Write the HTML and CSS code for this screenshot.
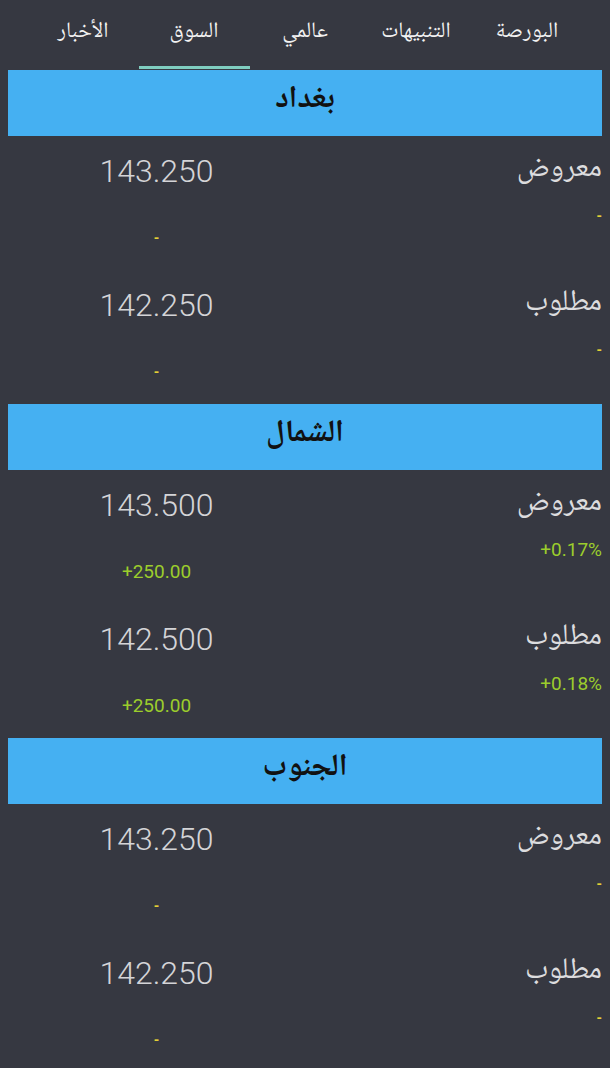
FILE: index.html
```html
<!DOCTYPE html>
<html lang="ar" dir="rtl">
  <head>
    <meta charset="UTF-8" />
    <meta name="viewport" content="width=device-width, initial-scale=1.0" />

    <title>السوق</title>

    <link rel="stylesheet" href="styles.css">
  </head>

  <body>
    <nav class="tabs">
      <div class="tab">البورصة</div>
      <div class="tab">التنبيهات</div>
      <div class="tab">عالمي</div>
      <div class="tab active">السوق</div>
      <div class="tab">الأخبار</div>
    </nav>

    <main class="markets">
      <section class="market">
        <h2 class="market-title">بغداد</h2>
        <div class="quote">
          <div class="quote-side">
            <div class="quote-label">معروض</div>
            <div class="quote-pct flat">-</div>
          </div>
          <div class="quote-main">
            <div class="quote-price">143.250</div>
            <div class="quote-diff flat">-</div>
          </div>
        </div>
        <div class="quote">
          <div class="quote-side">
            <div class="quote-label">مطلوب</div>
            <div class="quote-pct flat">-</div>
          </div>
          <div class="quote-main">
            <div class="quote-price">142.250</div>
            <div class="quote-diff flat">-</div>
          </div>
        </div>
      </section>

      <section class="market">
        <h2 class="market-title">الشمال</h2>
        <div class="quote">
          <div class="quote-side">
            <div class="quote-label">معروض</div>
            <div class="quote-pct up">+0.17%</div>
          </div>
          <div class="quote-main">
            <div class="quote-price">143.500</div>
            <div class="quote-diff up">+250.00</div>
          </div>
        </div>
        <div class="quote">
          <div class="quote-side">
            <div class="quote-label">مطلوب</div>
            <div class="quote-pct up">+0.18%</div>
          </div>
          <div class="quote-main">
            <div class="quote-price">142.500</div>
            <div class="quote-diff up">+250.00</div>
          </div>
        </div>
      </section>

      <section class="market">
        <h2 class="market-title">الجنوب</h2>
        <div class="quote">
          <div class="quote-side">
            <div class="quote-label">معروض</div>
            <div class="quote-pct flat">-</div>
          </div>
          <div class="quote-main">
            <div class="quote-price">143.250</div>
            <div class="quote-diff flat">-</div>
          </div>
        </div>
        <div class="quote">
          <div class="quote-side">
            <div class="quote-label">مطلوب</div>
            <div class="quote-pct flat">-</div>
          </div>
          <div class="quote-main">
            <div class="quote-price">142.250</div>
            <div class="quote-diff flat">-</div>
          </div>
        </div>
      </section>
    </main>
  </body>
</html>
```

FILE: styles.css
```css
html,
body {
  margin: 0;
  height: 100%;
  background: #363841;
  overflow: hidden;
}

body {
  font-family: "Noto Naskh Arabic", "Noto Sans Arabic", "DejaVu Sans", sans-serif;
  color: #e6e6e8;
}

/* Top tabs */
.tabs {
  display: flex;
  justify-content: center;
  height: 70px;
  box-sizing: border-box;
  padding-bottom: 1px;
}

.tab {
  width: 111px;
  box-sizing: border-box;
  padding-top: 15px;
  border-bottom: 3px solid transparent;
  text-align: center;
  font-size: 22px;
  line-height: 34px;
  color: #f2f2f2;
}

.tab.active {
  border-bottom-color: #7fcdbf;
}

/* Market blocks */
.markets {
  padding: 0 8px;
}

.market-title {
  margin: 0;
  height: 66px;
  line-height: 62px;
  background: #45b0f2;
  color: #111;
  text-align: center;
  font-size: 31px;
  font-weight: bold;
}

.quote {
  display: flex;
  height: 134px;
}

.quote-side,
.quote-main {
  flex: 1;
}

.quote-label {
  margin-top: 12px;
  height: 44px;
  line-height: 44px;
  font-size: 30px;
  color: #dcdcde;
}

.quote-pct {
  margin-top: 12px;
  line-height: 24px;
}

.quote-main {
  text-align: center;
}

.quote-price {
  margin-top: 15px;
  line-height: 40px;
  font-family: Roboto, "Liberation Sans", sans-serif;
  font-size: 32px;
  font-weight: 300;
  color: #d4d4d7;
}

.quote-diff {
  margin-top: 35px;
  line-height: 24px;
}

.quote-pct,
.quote-diff {
  font-family: Roboto, "Liberation Sans", sans-serif;
  font-size: 19px;
  direction: ltr;
  unicode-bidi: plaintext;
}

.quote-pct {
  text-align: right;
}

.flat {
  color: #e3cf36;
  font-size: 14px;
  font-weight: bold;
}

.up {
  color: #9ccd2c;
}
```
